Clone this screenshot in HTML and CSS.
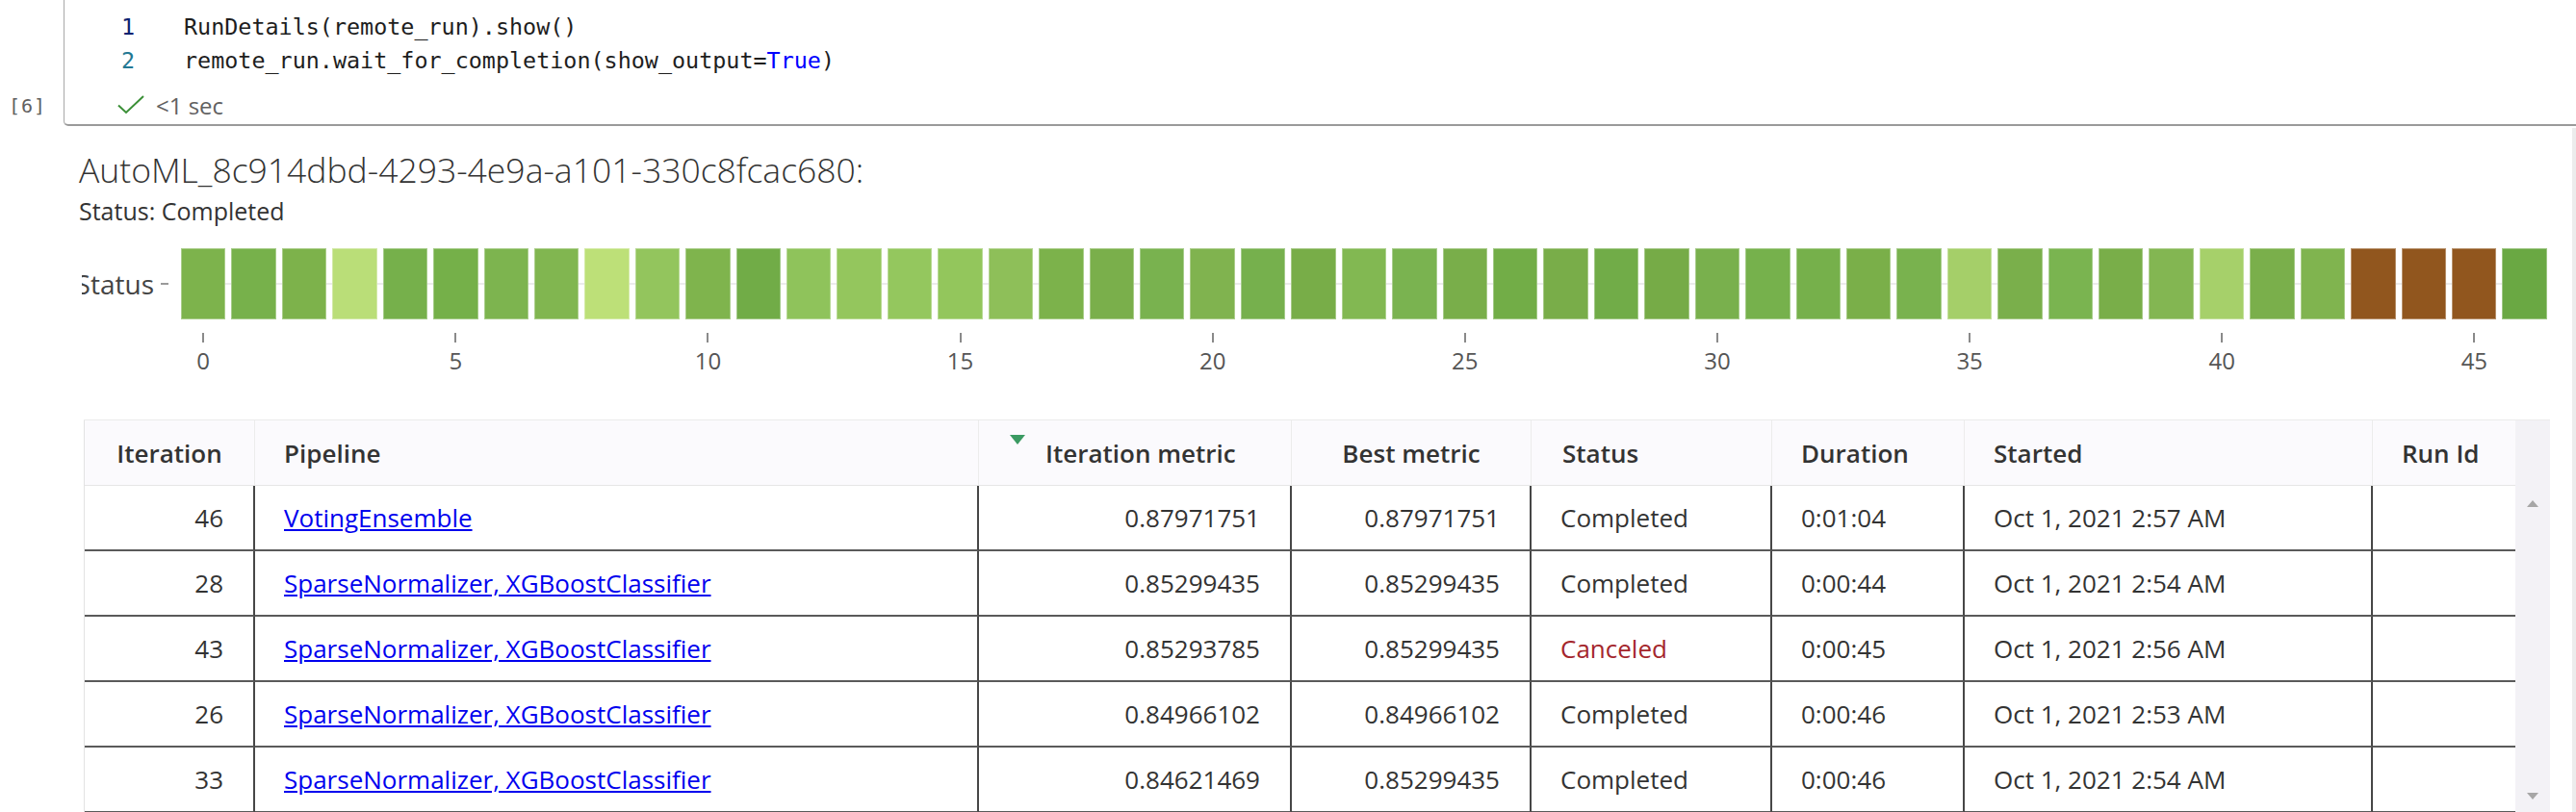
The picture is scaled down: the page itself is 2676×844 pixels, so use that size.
FILE: index.html
```html
<!DOCTYPE html>
<html>
<head>
<meta charset="utf-8">
<title>RunDetails</title>
<link rel="stylesheet" href="styles.css">
</head>
<body>
<div class="cell">
  <div class="prompt">[6]</div>
  <div class="cell-box">
    <div class="code">
      <div class="line"><span class="ln active">1</span><span class="src">RunDetails(remote_run).show()</span></div>
      <div class="line"><span class="ln">2</span><span class="src">remote_run.wait_for_completion(show_output=<span class="kw">True</span>)</span></div>
    </div>
    <div class="exec">
      <svg class="check" viewBox="0 0 28 20" aria-hidden="true"><path d="M1 10.5 L9 18 L27 1" fill="none" stroke="#3a8f36" stroke-width="2"/></svg>
      <span>&lt;1 sec</span>
    </div>
  </div>
</div>

<div class="output">
  <div class="title">AutoML_8c914dbd-4293-4e9a-a101-330c8fcac680:</div>
  <div class="run-status">Status: Completed</div>

  <div class="chart">
    <div class="yaxis"><span class="ylabel">Status</span><span class="ytick"></span></div>
    <div class="plot">
      <div class="bars">
        <div class="bar" style="background:#7db34c"></div>
        <div class="bar" style="background:#77b14b"></div>
        <div class="bar" style="background:#7db24b"></div>
        <div class="bar" style="background:#bade78"></div>
        <div class="bar" style="background:#76b04b"></div>
        <div class="bar" style="background:#75b049"></div>
        <div class="bar" style="background:#7db44f"></div>
        <div class="bar" style="background:#81b650"></div>
        <div class="bar" style="background:#bde078"></div>
        <div class="bar" style="background:#93c55d"></div>
        <div class="bar" style="background:#7fb44d"></div>
        <div class="bar" style="background:#71ac47"></div>
        <div class="bar" style="background:#8fc35b"></div>
        <div class="bar" style="background:#94c65d"></div>
        <div class="bar" style="background:#94c75e"></div>
        <div class="bar" style="background:#93c65c"></div>
        <div class="bar" style="background:#8ebf59"></div>
        <div class="bar" style="background:#7cb24b"></div>
        <div class="bar" style="background:#7aaf4b"></div>
        <div class="bar" style="background:#79b24f"></div>
        <div class="bar" style="background:#80b34f"></div>
        <div class="bar" style="background:#76b04d"></div>
        <div class="bar" style="background:#78ad48"></div>
        <div class="bar" style="background:#82b852"></div>
        <div class="bar" style="background:#7ab350"></div>
        <div class="bar" style="background:#79ae4a"></div>
        <div class="bar" style="background:#72ad47"></div>
        <div class="bar" style="background:#79ad49"></div>
        <div class="bar" style="background:#71ac48"></div>
        <div class="bar" style="background:#76ab47"></div>
        <div class="bar" style="background:#79b04d"></div>
        <div class="bar" style="background:#76b14c"></div>
        <div class="bar" style="background:#76b04b"></div>
        <div class="bar" style="background:#7aaf49"></div>
        <div class="bar" style="background:#79b24e"></div>
        <div class="bar" style="background:#a5cf69"></div>
        <div class="bar" style="background:#7aaf4b"></div>
        <div class="bar" style="background:#7ab450"></div>
        <div class="bar" style="background:#79ae49"></div>
        <div class="bar" style="background:#83b652"></div>
        <div class="bar" style="background:#a6d06a"></div>
        <div class="bar" style="background:#7aaf4b"></div>
        <div class="bar" style="background:#80b44f"></div>
        <div class="bar" style="background:#91561e"></div>
        <div class="bar" style="background:#91561e"></div>
        <div class="bar" style="background:#91561e"></div>
        <div class="bar" style="background:#6aa843"></div>
      </div>
      <div class="xaxis">
        <div class="xt"><i></i><span>0</span></div><div></div><div></div><div></div><div></div>
        <div class="xt"><i></i><span>5</span></div><div></div><div></div><div></div><div></div>
        <div class="xt"><i></i><span>10</span></div><div></div><div></div><div></div><div></div>
        <div class="xt"><i></i><span>15</span></div><div></div><div></div><div></div><div></div>
        <div class="xt"><i></i><span>20</span></div><div></div><div></div><div></div><div></div>
        <div class="xt"><i></i><span>25</span></div><div></div><div></div><div></div><div></div>
        <div class="xt"><i></i><span>30</span></div><div></div><div></div><div></div><div></div>
        <div class="xt"><i></i><span>35</span></div><div></div><div></div><div></div><div></div>
        <div class="xt"><i></i><span>40</span></div><div></div><div></div><div></div><div></div>
        <div class="xt"><i></i><span>45</span></div><div></div>
      </div>
    </div>
  </div>

  <div class="grid-wrap">
    <table class="runs">
      <colgroup>
        <col class="c-iter"><col class="c-pipe"><col class="c-imet"><col class="c-bmet"><col class="c-status"><col class="c-dur"><col class="c-start"><col class="c-run">
      </colgroup>
      <thead>
        <tr>
          <th class="center">Iteration</th>
          <th>Pipeline</th>
          <th class="sorted"><span class="sort-arrow"></span>Iteration metric</th>
          <th class="center">Best metric</th>
          <th class="pad32">Status</th>
          <th>Duration</th>
          <th>Started</th>
          <th>Run Id</th>
        </tr>
      </thead>
      <tbody>
        <tr>
          <td class="num">46</td>
          <td><a href="#">VotingEnsemble</a></td>
          <td class="num">0.87971751</td>
          <td class="num">0.87971751</td>
          <td>Completed</td>
          <td>0:01:04</td>
          <td>Oct 1, 2021 2:57 AM</td>
          <td></td>
        </tr>
        <tr>
          <td class="num">28</td>
          <td><a href="#">SparseNormalizer, XGBoostClassifier</a></td>
          <td class="num">0.85299435</td>
          <td class="num">0.85299435</td>
          <td>Completed</td>
          <td>0:00:44</td>
          <td>Oct 1, 2021 2:54 AM</td>
          <td></td>
        </tr>
        <tr>
          <td class="num">43</td>
          <td><a href="#">SparseNormalizer, XGBoostClassifier</a></td>
          <td class="num">0.85293785</td>
          <td class="num">0.85299435</td>
          <td class="canceled">Canceled</td>
          <td>0:00:45</td>
          <td>Oct 1, 2021 2:56 AM</td>
          <td></td>
        </tr>
        <tr>
          <td class="num">26</td>
          <td><a href="#">SparseNormalizer, XGBoostClassifier</a></td>
          <td class="num">0.84966102</td>
          <td class="num">0.84966102</td>
          <td>Completed</td>
          <td>0:00:46</td>
          <td>Oct 1, 2021 2:53 AM</td>
          <td></td>
        </tr>
        <tr>
          <td class="num">33</td>
          <td><a href="#">SparseNormalizer, XGBoostClassifier</a></td>
          <td class="num">0.84621469</td>
          <td class="num">0.85299435</td>
          <td>Completed</td>
          <td>0:00:46</td>
          <td>Oct 1, 2021 2:54 AM</td>
          <td></td>
        </tr>
      </tbody>
    </table>
    <div class="scrollbar">
      <div class="sb-head"></div>
      <span class="arrow up"></span>
      <div class="sb-fill"></div>
      <span class="arrow down"></span>
    </div>
  </div>
</div>
</body>
</html>
```

FILE: styles.css
```css
* { box-sizing: border-box; }
html, body { margin: 0; padding: 0; }
body {
  width: 2676px;
  height: 844px;
  overflow: hidden;
  background: #ffffff;
  font-family: "Open Sans", "Noto Sans", sans-serif;
  color: #333333;
}

/* ---------- notebook code cell ---------- */
.cell { display: flex; height: 131px; }
.prompt {
  width: 66px;
  flex: none;
  display: flex;
  align-items: flex-end;
  padding: 0 0 9px 9px;
  font-family: "DejaVu Sans Mono", "Liberation Mono", monospace;
  font-size: 20px;
  line-height: 24px;
  letter-spacing: 1px;
  color: #616161;
}
.cell-box {
  flex: 1;
  border-left: 1px solid #a8a8a8;
  border-bottom: 2px solid #9a9a9a;
  border-bottom-left-radius: 5px;
  padding-top: 11px;
}
.code {
  font-family: "DejaVu Sans Mono", "Liberation Mono", monospace;
  font-size: 23.4px;
  line-height: 35px;
  color: #1e1e1e;
}
.line { display: flex; white-space: pre; }
.ln { width: 124px; flex: none; padding-left: 59px; color: #237893; }
.ln.active { color: #0b216f; }
.kw { color: #0000ff; }
.exec {
  display: flex;
  align-items: center;
  gap: 12px;
  height: 36px;
  margin-top: 10px;
  padding-left: 55px;
  font-size: 24px;
  color: #616161;
}
.check { width: 28px; height: 20px; flex: none; }

/* ---------- output ---------- */
.output {
  height: 711px;
  margin-top: 2px;
  padding-left: 82px;
  border-right: 4px solid #ececec;
}
.title {
  padding-top: 21px;
  font-size: 35.5px;
  font-weight: 300;
  line-height: 44px;
  color: #333333;
  white-space: nowrap;
}
.run-status {
  margin-top: 5px;
  font-size: 25px;
  line-height: 32px;
  color: #333333;
}

/* chart */
.chart { display: flex; margin-top: 23px; margin-left: 3px; }
.yaxis {
  width: 103px;
  height: 74px;
  flex: none;
  display: flex;
  align-items: center;
  justify-content: flex-end;
  gap: 7px;
  padding-right: 13px;
  overflow: hidden;
}
.ylabel { flex: none; font-size: 28px; color: #444444; white-space: nowrap; }
.ytick { flex: none; width: 8px; height: 2px; background: #9a9a9a; }
.plot { width: 2458px; flex: none; }
.bars {
  display: flex;
  gap: 6px;
  height: 74px;
  background: linear-gradient(to bottom, transparent 36px, #ebebeb 36px, #ebebeb 38px, transparent 38px);
}
.bar { flex: 1; box-shadow: inset 0 0 0 1px rgba(255, 255, 255, 0.35); }
.xaxis {
  display: grid;
  grid-template-columns: repeat(47, 1fr);
  column-gap: 6px;
  padding-top: 14px;
}
.xt { display: flex; flex-direction: column; align-items: center; }
.xt i { display: block; width: 2px; height: 10px; background: #8a8a8a; }
.xt span { margin-top: 5px; font-size: 24px; line-height: 28px; color: #555555; white-space: nowrap; }

/* table */
.grid-wrap {
  display: flex;
  width: 2562px;
  margin-top: 47px;
  margin-left: 5px;
  border-top: 1px solid #ebebeb;
}
.runs {
  width: 2526px;
  flex: none;
  table-layout: fixed;
  border-collapse: separate;
  border-spacing: 0;
  border-left: 1px solid #e3e3e3;
  font-size: 26px;
  color: #333333;
}
.c-iter { width: 177px; }
.c-pipe { width: 752px; }
.c-imet { width: 325px; }
.c-bmet { width: 249px; }
.c-status { width: 250px; }
.c-dur { width: 200px; }
.c-start { width: 424px; }
.c-run { width: 148px; }

.runs tr { height: 68px; }
.runs th {
  position: relative;
  padding: 0 30px;
  background: #fbfafd;
  border-right: 1px solid #ececec;
  border-bottom: 1px solid #e6e6e6;
  font-weight: 600;
  text-align: left;
  white-space: nowrap;
}
.runs th:last-child { border-right: none; }
.runs th.center { text-align: center; padding: 0; }
.runs th.sorted { padding-left: 69px; }
.runs th.pad32 { padding-left: 32px; }
.sort-arrow {
  position: absolute;
  left: 32px;
  top: 15px;
  width: 0;
  height: 0;
  border-left: 8px solid transparent;
  border-right: 8px solid transparent;
  border-top: 10px solid #3b9a62;
}
.runs td {
  padding: 0 30px;
  border-right: 2px solid #474747;
  border-bottom: 2px solid #5a5a5a;
  white-space: nowrap;
  vertical-align: middle;
}
.runs td:last-child { border-right: none; }
.runs td.num { text-align: right; padding-right: 31px; }
.runs td.canceled { color: #a4262c; }
.runs a { color: #0000ee; text-decoration: underline; }

/* table scrollbar */
.scrollbar {
  width: 36px;
  flex: none;
  display: flex;
  flex-direction: column;
  align-items: center;
  background: #f3f2f6;
}
.sb-head { height: 68px; width: 100%; flex: none; }
.sb-fill { flex: 1; }
.arrow { width: 0; height: 0; flex: none; border-left: 6px solid transparent; border-right: 6px solid transparent; }
.arrow.up { margin-top: 15px; border-bottom: 7px solid #a6a6a6; }
.arrow.down { margin-bottom: 14px; border-top: 7px solid #a6a6a6; }
```
